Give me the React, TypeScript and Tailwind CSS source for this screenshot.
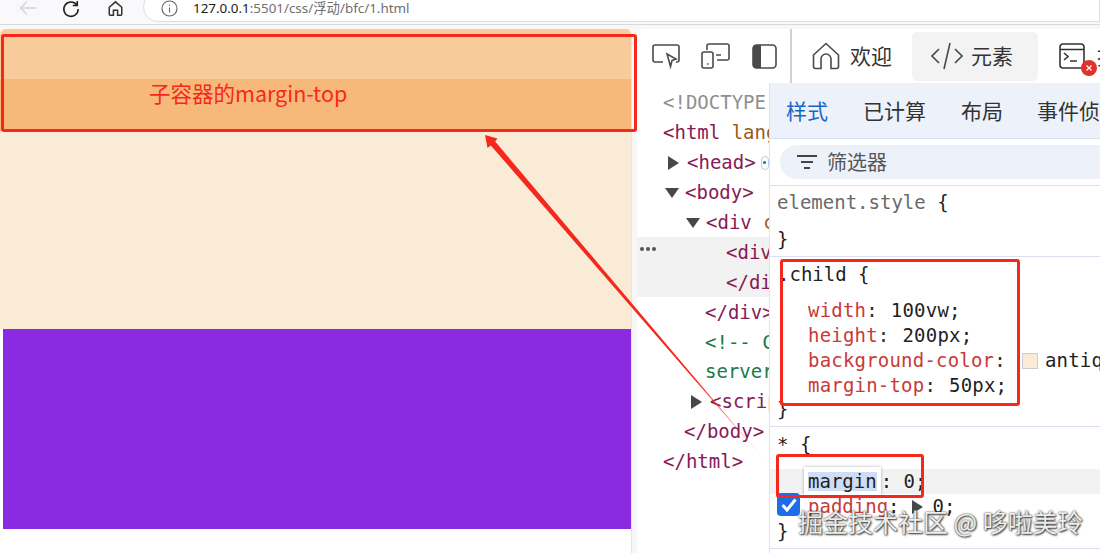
import React from "react";

const mono = "font-['DejaVu_Sans_Mono','Liberation_Mono',monospace]";
const cjk = "font-['Noto_Sans_CJK_SC','Noto_Sans',sans-serif]";

function Tri({ dir = "down" }: { dir?: "down" | "right" }) {
  return (
    <svg width="14" height="14" viewBox="0 0 14 14" className="shrink-0">
      {dir === "down" ? <path d="M0 2h14L7 12z" fill="#474747" /> : <path d="M1 0v14l11-7z" fill="#474747" />}
    </svg>
  );
}

function TreeRow({ pad, children, hl, tri }: { pad: string; children: React.ReactNode; hl?: boolean; tri?: "down" | "right" }) {
  return (
    <div className={`h-[29.9px] flex items-center whitespace-nowrap ${pad} ${hl ? "bg-[#f2f2f2]" : ""}`}>
      {tri && <span className="mr-[6px] flex"><Tri dir={tri} /></span>}
      {children}
    </div>
  );
}

function Prop({ name, value, extra }: { name: string; value: string; extra?: React.ReactNode }) {
  return (
    <div className="h-[25px] flex items-center whitespace-nowrap pl-[38px] tracking-[0.2px]">
      <span className="text-[#c83a37]">{name}</span>
      <span className="text-[#303030]">:</span>
      {extra}
      <span className="text-[#1f1f1f] ml-[13px]">{value}</span>
    </div>
  );
}

export default function App() {
  return (
    <div className="relative w-[1100px] h-[553px] overflow-hidden bg-[#f7f7f8] flex flex-col">
      {/* browser bar */}
      <div className="h-[25px] shrink-0 flex items-center bg-[#f9f9fb] border-b border-[#d9d9dc] relative">
        <svg width="17" height="16" viewBox="0 0 17 16" fill="none" stroke="#d4d4d6" strokeWidth="1.3" className="ml-[19px] -mt-[8px]">
          <path d="M17 8H1.500M8 1.500 1.500 8 8 14.500" />
        </svg>
        <svg width="18" height="18" viewBox="0 0 20 20" fill="none" stroke="#222" strokeWidth="1.7" className="ml-[26px] -mt-[6px]">
          <path d="M16.500 5.500A8 8 0 1 0 18 10M17 1v5h-5" />
        </svg>
        <svg width="15" height="17" viewBox="0 0 18 20" fill="none" stroke="#333" strokeWidth="1.800" className="ml-[28px] -mt-[7px]">
          <path d="M1.500 8.500 9 2l7.500 6.500V17a1 1 0 0 1-1 1h-4v-6h-5v6h-4a1 1 0 0 1-1-1z" />
        </svg>
        <div className="ml-[20px] flex-1 h-[30px] -mt-[11px] bg-white border border-[#dcdce4] rounded-l-[15px] flex items-center pl-[17px]">
          <svg width="17" height="17" viewBox="0 0 17 17" fill="none" stroke="#666" strokeWidth="1.1" className="mt-[4px]">
            <circle cx="8.500" cy="8.500" r="7.500" />
            <path d="M8.500 7.500v5M8.500 4.500v1.200" />
          </svg>
          <span className="ml-[15px] mt-[3px] text-[13.400px] font-['Noto_Sans','Noto_Sans_CJK_SC',sans-serif] whitespace-nowrap">
            <span className="text-[#1c1c1c]">127.0.0.1</span>
            <span className="text-[#6f6f6f]">:5501/css/浮动/bfc/1.html</span>
          </span>
        </div>
      </div>

      <div className="flex-1 flex min-h-0 pt-[4px]">
        {/* page */}
        <div className="w-[632px] shrink-0 flex flex-col bg-white border-r border-[#e4e4e4] pl-[3px] pr-0 rounded-t-[6px] overflow-hidden">
          <div className="h-[50px] shrink-0 bg-[#f8cb9b] -ml-[3px]" />
          <div className="h-[52px] shrink-0 bg-[#f7b97a] -ml-[3px] flex items-center pl-[149px]">
            <span className={`text-[21.500px] text-[#f5281e] whitespace-nowrap ${cjk} -mt-[24px]`}>子容器的margin-top</span>
          </div>
          <div className="h-[198px] shrink-0 bg-[#faebd7] -ml-[3px]" />
          <div className="h-[200px] shrink-0 bg-[#8a2be2]" />
          <div className="flex-1 bg-white" />
        </div>

        {/* devtools */}
        <div className="flex-1 ml-[5px] bg-white rounded-tl-[8px] flex flex-col min-w-0 relative overflow-hidden">
          {/* toolbar */}
          <div className="h-[54px] shrink-0 flex items-center relative whitespace-nowrap">
            <svg width="28" height="25" viewBox="0 0 28 25" fill="none" stroke="#4a4a4a" strokeWidth="1.600" className="ml-[15px] shrink-0">
              <path d="M11 18H3a2 2 0 0 1-2-2V3a2 2 0 0 1 2-2h22a2 2 0 0 1 2 2v13a2 2 0 0 1-2 2h-1" />
              <path d="M15 10l9 5-4 1.500-1.500 6z" />
            </svg>
            <svg width="29" height="26" viewBox="0 0 29 26" fill="none" stroke="#4a4a4a" strokeWidth="1.600" className="ml-[21px] shrink-0">
              <path d="M6 7V3a2 2 0 0 1 2-2h18a2 2 0 0 1 2 2v12a2 2 0 0 1-2 2H16" />
              <rect x="1" y="9" width="11" height="16" rx="2" />
              <path d="M6 21h1.500M15 12h5" />
            </svg>
            <svg width="25" height="25" viewBox="0 0 25 25" className="ml-[22px] shrink-0">
              <rect x="1" y="1" width="23" height="23" rx="3.500" fill="none" stroke="#4a4a4a" strokeWidth="1.600" />
              <path d="M4.500 1H9v23H4.500A3.500 3.500 0 0 1 1 20.500V4.500A3.500 3.500 0 0 1 4.500 1z" fill="#4a4a4a" />
            </svg>
            <div className="w-[2px] h-[54px] bg-[#d0d0d0] ml-[13px] shrink-0" />
            <svg width="28" height="28" viewBox="0 0 28 28" fill="none" stroke="#4a4a4a" strokeWidth="1.600" className="ml-[20px] shrink-0">
              <path d="M1.500 13 14 1.500 26.500 13v11.500a2 2 0 0 1-2 2H19V17a5 5 0 0 0-10 0v9.500H3.500a2 2 0 0 1-2-2z" />
            </svg>
            <span className={`ml-[10px] text-[21px] text-[#333] ${cjk}`}>欢迎</span>
            <div className="ml-[20px] w-[126px] h-[49px] bg-[#f3f3f3] rounded-[5px] flex items-center pl-[19px] shrink-0">
              <svg width="32" height="28" viewBox="0 0 32 28" fill="none" stroke="#4a4a4a" strokeWidth="1.600">
                <path d="M8 7 1 14l7 7M24 7l7 7-7 7M19 1l-6 26" />
              </svg>
              <span className={`ml-[8px] text-[21px] text-[#333] ${cjk}`}>元素</span>
            </div>
            <div className="ml-[21px] relative w-[26px] h-[26px] shrink-0">
              <svg width="26" height="26" viewBox="0 0 26 26" fill="none" stroke="#333" strokeWidth="1.600">
                <rect x="1" y="1" width="24" height="24" rx="3" />
                <path d="M1 6.500h24M5 10l4 3.500L5 17M11 18h7" />
              </svg>
              <span className="absolute left-[22px] top-[17px] w-[16px] h-[16px] rounded-full bg-[#e0322d] flex items-center justify-center z-10">
                <svg width="8" height="8" viewBox="0 0 8 8" stroke="#fff" strokeWidth="1.200"><path d="M1.500 1.500l5 5M6.500 1.500l-5 5" /></svg>
              </span>
            </div>
            <span className={`ml-[12px] text-[21px] text-[#333] ${cjk}`}>控制台</span>
          </div>

          <div className="flex-1 flex min-h-0">
            {/* elements tree */}
            <div className={`w-[132px] shrink-0 overflow-hidden pt-[5px] text-[19px] ${mono} leading-none text-[#881a55] relative`}>
              <TreeRow pad="pl-[26px]"><span className="text-[#8f8f8f]">&lt;!DOCTYPE html&gt;</span></TreeRow>
              <TreeRow pad="pl-[26px]"><span>&lt;html <span className="text-[#9a5a1e]">lang</span></span></TreeRow>
              <TreeRow pad="pl-[30px]" tri="right"><span>&lt;head&gt;</span><span className="ml-[5px] w-[14px] h-[14px] rounded-full border border-[#b9c8ee] flex items-center justify-center"><span className="w-[3px] h-[3px] rounded-full bg-[#1a66c8]" /></span></TreeRow>
              <TreeRow pad="pl-[28px]" tri="down"><span>&lt;body&gt;</span></TreeRow>
              <TreeRow pad="pl-[49px]" tri="down"><span>&lt;div <span className="text-[#9a5a1e]">c</span></span></TreeRow>
              <TreeRow pad="pl-[89px]" hl><span>&lt;div</span></TreeRow>
              <TreeRow pad="pl-[89px]" hl><span>&lt;/div</span></TreeRow>
              <TreeRow pad="pl-[68px]"><span>&lt;/div&gt;</span></TreeRow>
              <TreeRow pad="pl-[68px]"><span className="text-[#207a45]">&lt;!-- C</span></TreeRow>
              <TreeRow pad="pl-[68px]"><span className="text-[#207a45]">server</span></TreeRow>
              <TreeRow pad="pl-[53px]" tri="right"><span>&lt;scrip</span></TreeRow>
              <TreeRow pad="pl-[47px]"><span>&lt;/body&gt;</span></TreeRow>
              <TreeRow pad="pl-[26px]"><span>&lt;/html&gt;</span></TreeRow>
              <span className="absolute left-[3px] top-[164px] flex gap-[2px]">
                <span className="w-[4px] h-[4px] rounded-full bg-[#555]" />
                <span className="w-[4px] h-[4px] rounded-full bg-[#555]" />
                <span className="w-[4px] h-[4px] rounded-full bg-[#555]" />
              </span>
            </div>

            {/* styles */}
            <div className="flex-1 min-w-0 border-l border-[#dfe3ee] flex flex-col overflow-hidden bg-white">
              <div className={`h-[56px] shrink-0 bg-[#edf1f9] border-b border-[#d9e0f0] flex items-center pl-[16px] text-[21px] ${cjk} whitespace-nowrap text-[#333]`}>
                <span className="text-[#1a66c8]">样式</span>
                <span className="ml-[35px]">已计算</span>
                <span className="ml-[35px]">布局</span>
                <span className="ml-[34px]">事件侦听器</span>
              </div>
              <div className="h-[47px] shrink-0 border-b border-[#d9e0f0] flex items-center pl-[10px]">
                <div className="flex-1 h-[34px] bg-[#edf1f9] rounded-l-[17px] flex items-center pl-[17px]">
                  <svg width="20" height="14" viewBox="0 0 20 14" stroke="#444" strokeWidth="1.800"><path d="M0 1h20M4 7h12M7 13h6" /></svg>
                  <span className={`ml-[10px] text-[20px] text-[#555] ${cjk}`}>筛选器</span>
                </div>
              </div>
              <div className={`text-[19px] ${mono} leading-none text-[#1f1f1f]`}>
                <div className="h-[71px] border-b border-[#d9e0f0] pl-[7px] pt-[1px]">
                  <div className="h-[30px] flex items-center"><span className="text-[#6a6a6a]">element.style</span>&nbsp;&#123;</div>
                  <div className="h-[30px] mt-[7px] flex items-center">&#125;</div>
                </div>
                <div className="h-[170px] border-b border-[#d9e0f0]">
                  <div className="h-[34px] pl-[8px] flex items-center">.child &#123;</div>
                  <div className="h-[7px]" />
                  <Prop name="width" value="100vw;" />
                  <Prop name="height" value="200px;" />
                  <Prop name="background-color" value="antiquewhite;" extra={<span className="ml-[16px] w-[16px] h-[16px] bg-[#faebd7] border border-[#ccc] shrink-0 mr-[-6px]" />} />
                  <Prop name="margin-top" value="50px;" />
                  <div className="h-[22px] pl-[7px] flex items-center">&#125;</div>
                </div>
                <div className="h-[122px] border-b border-[#d9e0f0] relative">
                  <div className="h-[34px] pl-[7px] flex items-center">* &#123;</div>
                  <div className="h-[25px] mt-[8px] bg-[#f2f2f2] flex items-center pl-[34px] whitespace-nowrap">
                    <span className="bg-white px-[4px] h-[30px] flex items-center shadow-[0_0_3px_rgba(0,0,0,0.3)]"><span className="bg-[#cfdcf5]">margin</span></span>
                    <span>:&nbsp;0;</span>
                  </div>
                  <div className="h-[25px] flex items-center pl-[38px] whitespace-nowrap">
                    <span className="text-[#c83a37]">padding</span>:
                    <span className="ml-[11px] mr-[8px] flex"><Tri dir="right" /></span>0;
                  </div>
                  <div className="h-[25px] pl-[7px] flex items-center">&#125;</div>
                  <span className="absolute left-[7px] top-[66px] w-[23px] h-[23px] rounded-[4px] bg-[#1f6be8] flex items-center justify-center">
                    <svg width="16" height="14" viewBox="0 0 16 14" fill="none" stroke="#fff" strokeWidth="3"><path d="M1.500 7l4.500 5L14.500 1.500" /></svg>
                  </span>
                </div>
              </div>
            </div>
          </div>
        </div>
      </div>

      {/* annotation boxes */}
      <div className="absolute left-[1px] top-[34px] w-[636px] h-[98px] border-[3px] border-[#f5281e] rounded-[3px]" />
      <div className="absolute left-[780px] top-[259px] w-[240px] h-[147px] border-[3px] border-[#f5281e] rounded-[3px]" />
      <div className="absolute left-[776px] top-[454px] w-[148px] h-[44px] border-[3px] border-[#f5281e] rounded-[3px]" />
      <svg width="1100" height="553" viewBox="0 0 1100 553" className="absolute left-0 top-0 pointer-events-none">
        <defs>
          <linearGradient id="arrowFade" gradientUnits="userSpaceOnUse" x1="485" y1="135" x2="766" y2="462">
            <stop offset="0" stopColor="#f5281e" />
            <stop offset="0.75" stopColor="#f5281e" />
            <stop offset="1" stopColor="#f5281e" stopOpacity="0.15" />
          </linearGradient>
        </defs>
        <path d="M485 135 497.500 138.500 495.200 141.600 766 462 490.800 145.400 487.500 148z" fill="url(#arrowFade)" />
      </svg>

      {/* watermark */}
      <span className={`absolute left-[798px] top-[503px] text-[25px] leading-[36px] whitespace-nowrap text-[#ececec] ${cjk} [text-shadow:0_0_2px_#333,1px_1px_2px_#333]`}>
        掘金技术社区 @ 哆啦美玲
      </span>
    </div>
  );
}
